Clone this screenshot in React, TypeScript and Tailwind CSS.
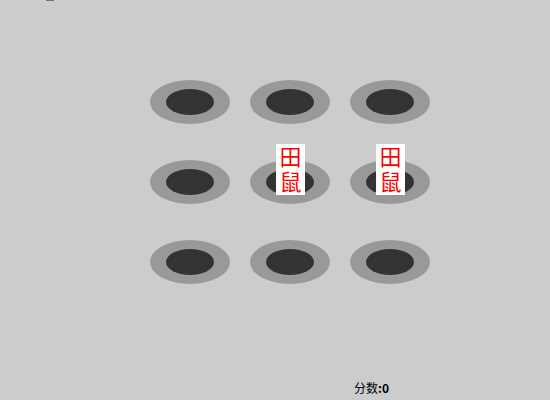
const HOLES = [false, false, false, false, true, true, false, false, false];

function Hole({ mole }: { mole: boolean }) {
  return (
    <div className="relative w-[80px] h-[44px] rounded-[50%] bg-[#999999] flex items-center justify-center">
      <div className="w-[48px] h-[26px] rounded-[50%] bg-[#333333]" />
      {mole && (
        <div
          className="absolute left-[26px] top-[-16px] w-[29px] h-[51px] bg-white text-[#ff0000] text-[22px] leading-[25px] text-center pt-[1px]"
          style={{ fontFamily: '"Liberation Serif", "Noto Sans CJK SC", serif' }}
        >
          <div>田</div>
          <div>鼠</div>
        </div>
      )}
    </div>
  );
}

export default function App() {
  return (
    <div
      className="w-[550px] h-[400px] bg-[#cccccc] overflow-hidden"
      style={{ fontFamily: '"Noto Sans CJK SC", sans-serif' }}
    >
      <div className="h-[2px] pl-[46px]">
        <div className="w-[8px] h-[1px] bg-[#777777]" />
      </div>
      <div className="mt-[78px] ml-[150px] grid grid-cols-[80px_80px_80px] gap-x-[20px] gap-y-[36px]">
        {HOLES.map((m, i) => (
          <Hole key={i} mole={m} />
        ))}
      </div>
      <div className="mt-[95px] pl-[354px] text-[12px] leading-[17px] text-black">
        分数<b>:0</b>
      </div>
    </div>
  );
}
